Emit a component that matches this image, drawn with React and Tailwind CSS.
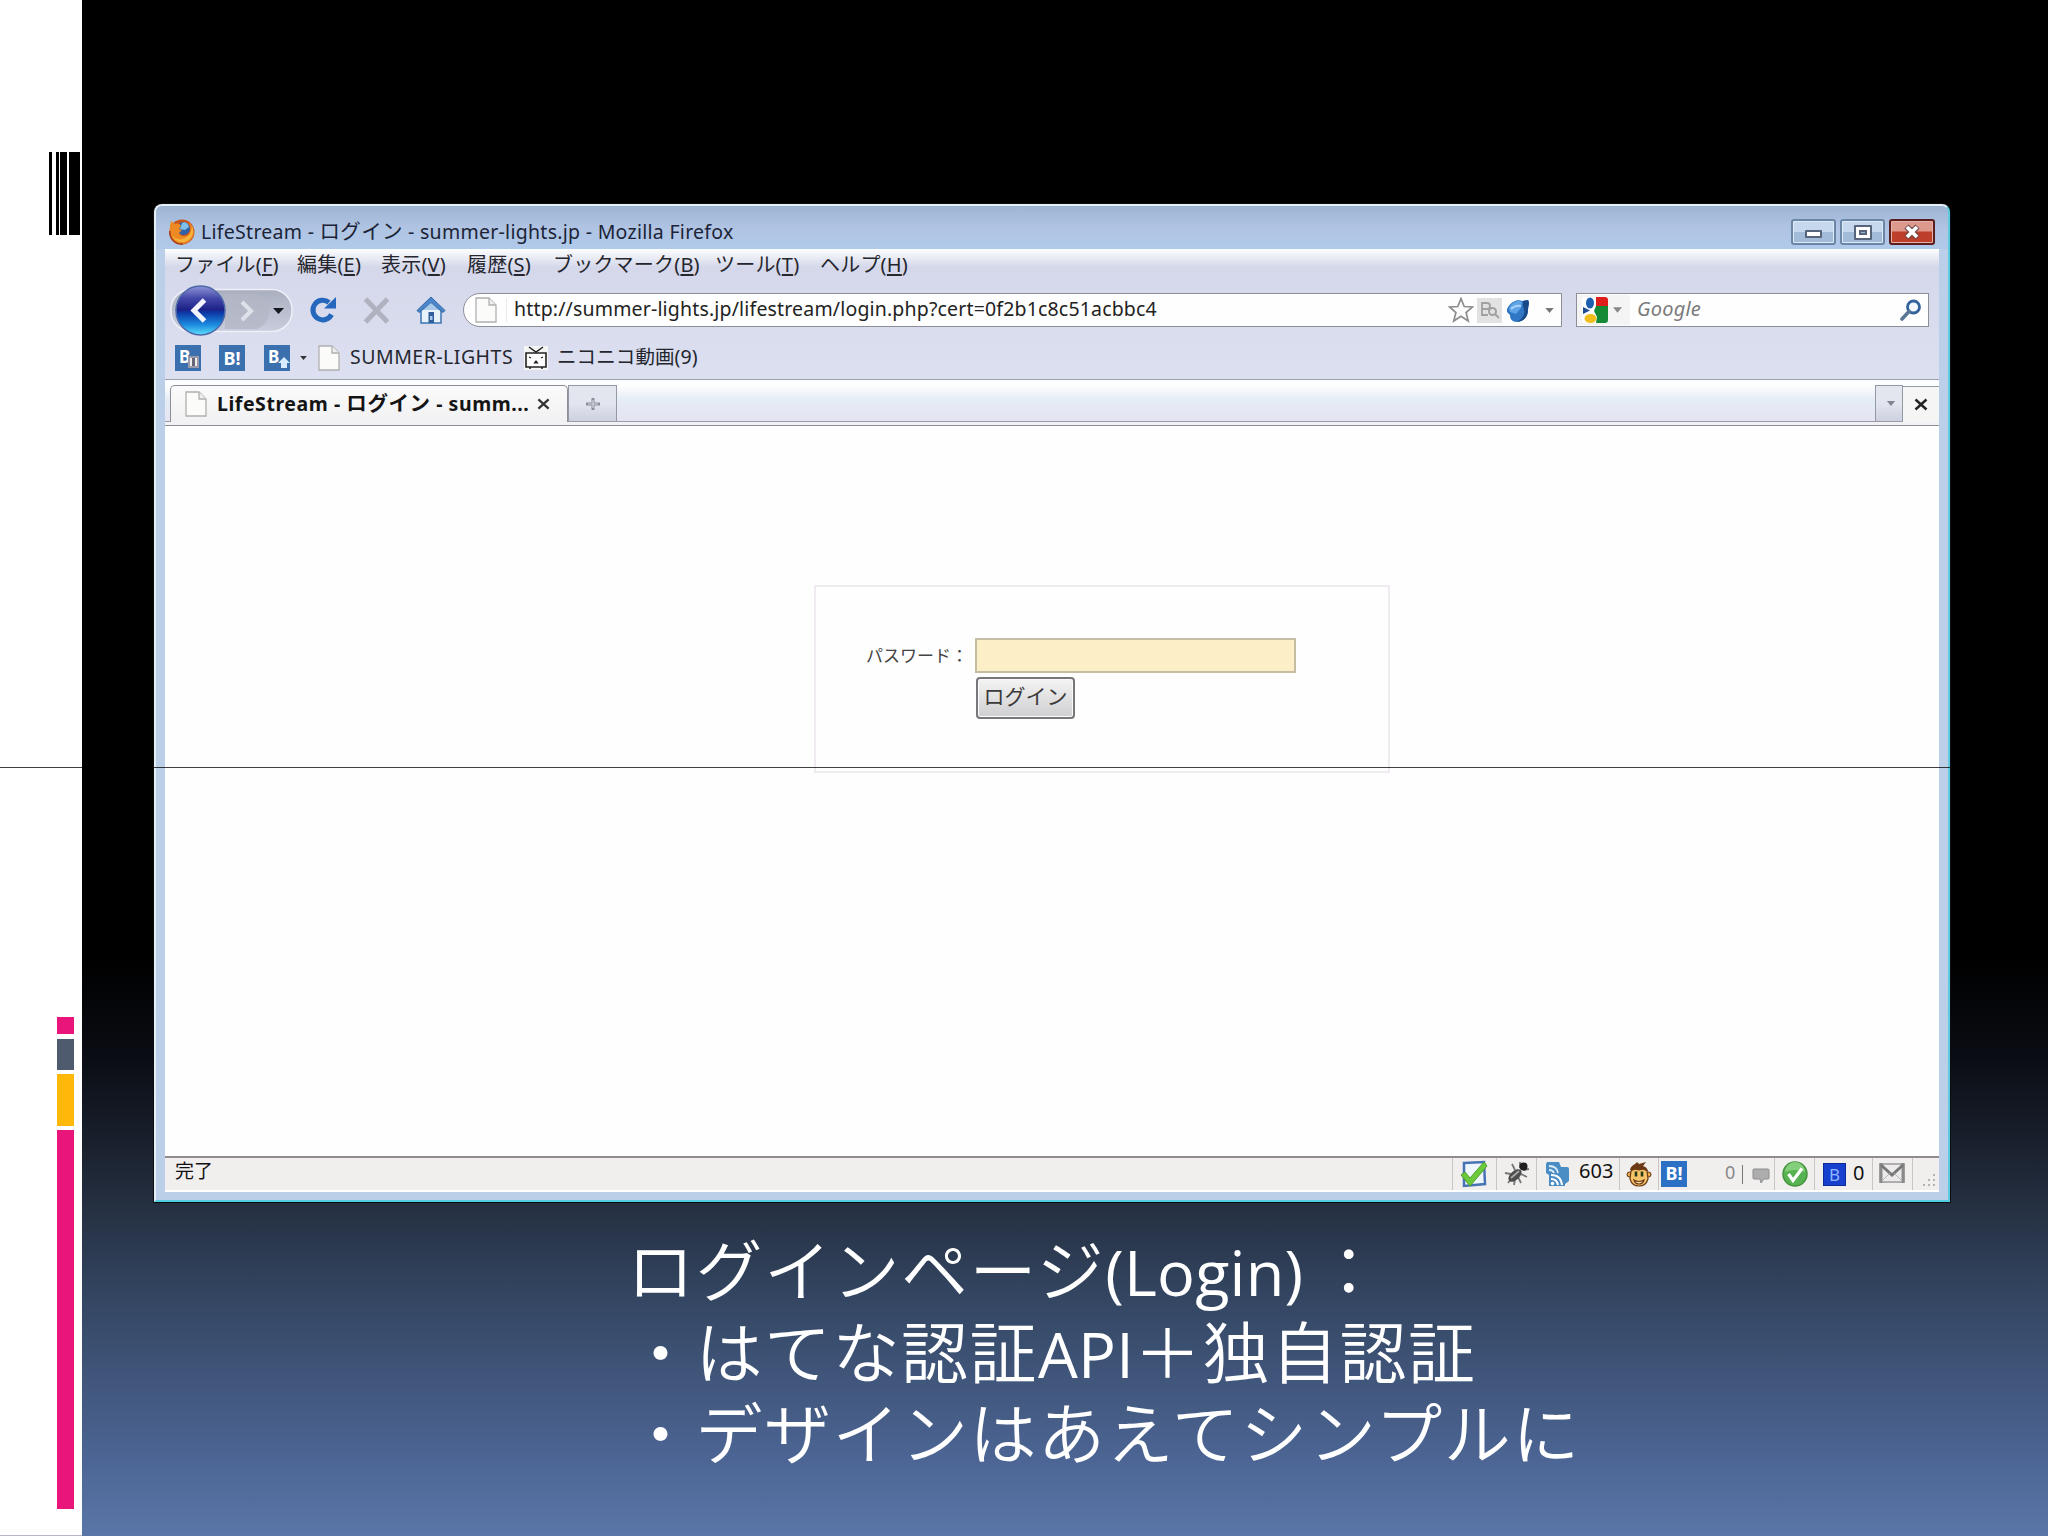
import React from "react";

const FileIcon = ({ className }) => (
  <svg viewBox="0 0 22 26" className={className}>
    <path d="M1 1h13l7 7v17H1z" fill="#fbfbfa" stroke="#b0b0b0" strokeWidth="1.3" />
    <path d="M14 1v7h7" fill="#eee" stroke="#b0b0b0" strokeWidth="1.3" />
  </svg>
);

const FirefoxIcon = () => (
  <svg viewBox="0 0 28 28" className="w-[28px] h-[28px]">
    <circle cx="14" cy="14" r="12.5" fill="#c9541a" />
    <circle cx="15.500" cy="10.500" r="6.500" fill="#2f62a8" />
    <path d="M14 5c3-2 6 0 7 4l-4 3-5-1z" fill="#7fc0ea" />
    <path d="M2 8l1-5 4 3c3-1 5 0 6 2l-2 3 3 1-3 3c1 4 7 4 10 1 2-3 2-8-1-12 5 3 8 11 4 16-4 7-14 8-19 2C2 18 1 13 2 8z" fill="#ee8a24" />
    <path d="M24 8c3 6 0 14-8 16-5 1-10-2-12-7 3 4 8 6 13 3 4-2 7-6 7-12z" fill="#f6b43c" />
    <path d="M2 13c-1 7 5 14 13 13" fill="none" stroke="#a83c14" strokeWidth="1.5" />
  </svg>
);

const Caret = ({ className }) => (
  <svg viewBox="0 0 10 6" className={className}>
    <path d="M0 0h10L5 6z" fill="currentColor" />
  </svg>
);

const Cross = ({ className }) => (
  <svg viewBox="0 0 14 12" className={className}>
    <path d="M1.500 1l11 10M12.500 1l-11 10" stroke="currentColor" strokeWidth="2.400" fill="none" />
  </svg>
);

const menus = [
  { label: "ファイル", k: "F", w: "w-[122px]" },
  { label: "編集", k: "E", w: "w-[84px]" },
  { label: "表示", k: "V", w: "w-[86px]" },
  { label: "履歴", k: "S", w: "w-[86px]" },
  { label: "ブックマーク", k: "B", w: "w-[162px]" },
  { label: "ツール", k: "T", w: "w-[105px]" },
  { label: "ヘルプ", k: "H", w: "w-[100px]" },
];

const TitleBar = () => (
  <div className="h-[43px] shrink-0 flex items-start pl-[12px] pt-[12px] pr-[13px] bg-linear-to-b from-[#9cb5d3] via-[#b0c3e2] to-[#b0caeb]">
    <FirefoxIcon />
    <div className="ml-[5px] text-[19.5px] leading-[26px] text-[#1b2436] whitespace-nowrap tracking-[0.28px]">
      LifeStream - <span className="text-[20.5px]">ログイン</span> - summer-lights.jp - Mozilla Firefox
    </div>
    <div className="ml-auto mt-[1px] flex gap-[4px]">
      <div className="w-[45px] h-[26px] rounded-[3px] border-2 border-[#6b87a8] bg-linear-to-b from-[#c6d8ed] from-50% to-[#a2bbd9] to-50% shadow-[inset_0_0_0_1px_#dfeaf7] flex justify-center">
        <div className="mt-[9px] w-[17px] h-[8px] bg-white border-2 border-[#56657c] rounded-[1px]" />
      </div>
      <div className="w-[45px] h-[26px] rounded-[3px] border-2 border-[#6b87a8] bg-linear-to-b from-[#c6d8ed] from-50% to-[#a2bbd9] to-50% shadow-[inset_0_0_0_1px_#dfeaf7] flex items-center justify-center">
        <div className="w-[18px] h-[15px] bg-white border-2 border-[#56657c] rounded-[1px] flex items-center justify-center">
          <div className="w-[8px] h-[5px] border-2 border-[#56657c] bg-[#9db4d0]" />
        </div>
      </div>
      <div className="w-[46px] h-[26px] rounded-[3px] border-2 border-[#5b1d1d] bg-linear-to-b from-[#dd9a8c] from-45% to-[#bd3e29] to-50% shadow-[inset_0_0_0_1px_#e8b3a8] flex items-center justify-center">
        <svg viewBox="0 0 18 16" className="w-[18px] h-[16px]">
          <path d="M3.500 2.500l11 11M14.500 2.500l-11 11" stroke="#6b4747" strokeWidth="6" />
          <path d="M4 3l10 10M14 3L4 13" stroke="#fff" strokeWidth="3.800" />
        </svg>
      </div>
    </div>
  </div>
);

const NavBar = () => (
  <div className="h-[52px] flex items-center pl-[4px]">
    {/* back / forward */}
    <svg viewBox="0 0 126 52" className="w-[126px] h-[52px]">
      <defs>
        <linearGradient id="pill" x1="0" y1="0" x2="0" y2="1">
          <stop offset="0" stopColor="#a9afbf" />
          <stop offset="1" stopColor="#c9cddd" />
        </linearGradient>
        <linearGradient id="back" x1="0" y1="0" x2="0" y2="1">
          <stop offset="0" stopColor="#8f95d8" />
          <stop offset="0.25" stopColor="#4348a8" />
          <stop offset="0.48" stopColor="#1c2288" />
          <stop offset="0.55" stopColor="#0c3aa8" />
          <stop offset="0.8" stopColor="#1d8ee0" />
          <stop offset="1" stopColor="#5fe0fa" />
        </linearGradient>
      </defs>
      <rect x="2" y="5.500" width="121" height="42" rx="20" fill="url(#pill)" stroke="#edf0f8" strokeWidth="1.500" />
      <path d="M56 10h32c8 4 12 8 12 17s-4 14-12 18H56z" fill="#b3b7c4" opacity=".75" />
      <path d="M73 18l9 9-9 9" fill="none" stroke="#dfe1ea" strokeWidth="4" />
      <path d="M104 24h11l-5.500 6z" fill="#15181f" />
      <circle cx="31.500" cy="26.500" r="24.500" fill="url(#back)" stroke="#4d68a8" strokeWidth="1.500" />
      <path d="M35.500 16L25 26.500 35.500 37" fill="none" stroke="#f2f4ff" strokeWidth="5" />
    </svg>
    {/* reload */}
    <svg viewBox="0 0 28 28" className="ml-[14px] w-[28px] h-[28px]">
      <path d="M22.500 18.500A9.800 9.800 0 1 1 20 6.500" fill="none" stroke="#2467bd" strokeWidth="5" />
      <path d="M15 12.500L27 12.500V1z" fill="#2467bd" />
    </svg>
    {/* stop */}
    <svg viewBox="0 0 28 28" className="ml-[26px] w-[28px] h-[28px]">
      <path d="M2.500 3l22 23M24.500 3l-22 23" stroke="#b0b3bf" strokeWidth="5" />
    </svg>
    {/* home */}
    <svg viewBox="0 0 30 28" className="ml-[25px] w-[30px] h-[28px]">
      <path d="M5 13h20v14H5z" fill="#e8f2fb" stroke="#3d74b2" strokeWidth="1.500" />
      <path d="M15 1L1 14.500l2 2L15 7l12 9.500 2-2z" fill="#4d86c8" stroke="#2f67a9" />
      <path d="M15 7l8 7H7z" fill="#a9c9ea" />
      <path d="M12.500 16h5.500v11h-5.500z" fill="#30609c" />
      <path d="M14 20h2.500v4H14z" fill="#a9c9ea" />
    </svg>

    <div className="ml-[17px] w-[1099px] h-[34px] rounded-l-[17px] border border-[#8c8f98] bg-[#fefefe] flex items-center">
      <FileIcon className="ml-[11px] w-[22px] h-[26px]" />
      <div className="ml-[9px] w-px h-[24px] bg-[#ebebee]" />
      <div className="ml-[7px] -mt-[2px] text-[19.5px] text-[#222] tracking-[0.17px] whitespace-nowrap">
        http://summer-lights.jp/lifestream/login.php?cert=0f2b1c8c51acbbc4
      </div>
      <div className="ml-auto flex items-center">
        <svg viewBox="0 0 26 26" className="w-[26px] h-[26px]">
          <path d="M13 1.500l3.200 8 8.300.5-6.400 5.500 2.200 8.500-7.300-4.700L5.700 24l2.200-8.500L1.500 10l8.300-.5z" fill="#fcfcfc" stroke="#8d8d8d" strokeWidth="1.700" />
        </svg>
        <div className="ml-[3px] w-[25px] h-[25px] bg-[#e2e2e2] flex items-center justify-center">
          <svg viewBox="0 0 20 18" className="w-[20px] h-[18px] text-[#a0a0a0]">
            <path d="M2 2h5a3 3 0 0 1 0 6H2zM2 8h6M2 8v6h6" fill="none" stroke="currentColor" strokeWidth="1.800" />
            <circle cx="12.500" cy="10.500" r="3.500" fill="none" stroke="currentColor" strokeWidth="2" />
            <path d="M15 13l4 4" stroke="currentColor" strokeWidth="2" />
          </svg>
        </div>
        <svg viewBox="0 0 24 26" className="ml-[4px] w-[24px] h-[26px]">
          <path d="M1 12C5 4 12 2 16 4l6-1c2 3 0 6 0 10 0 8-6 12-11 12S4 22 4 18l-3-3z" fill="#2f76c5" />
          <path d="M3 11C7 4 12 3 16 5l-1 6-5 6-6-2z" fill="#5ca4e6" />
          <path d="M17 4l5-1c2 3 0 6 0 10 0 8-6 12-11 12 7-4 9-10 6-16z" fill="#174a86" />
          <path d="M5 12c3-3 6-4 10-3" fill="none" stroke="#a8d2f7" strokeWidth="2" />
        </svg>
        <Caret className="ml-[15px] mr-[7px] w-[9px] h-[5px] text-[#777]" />
      </div>
    </div>

    <div className="ml-[14px] w-[353px] h-[34px] border border-[#8c8f98] bg-[#fefefe] flex items-center">
      <div className="w-[53px] h-[30px] bg-[#f4f4f4] flex items-center">
        <svg viewBox="0 0 26 26" className="ml-[5px] w-[26px] h-[26px]">
          <path d="M0 0h26v26H0z" fill="#fff" />
          <path d="M14 0h9q3 0 3 3v6H14z" fill="#e01d1d" />
          <path d="M14 9h12v14q0 3-3 3h-9l1-6-3-6z" fill="#148a35" />
          <ellipse cx="8" cy="6" rx="4" ry="5.500" fill="#1d5fae" />
          <path d="M1 10l7 3.500L1 17z" fill="#1e4b93" />
          <ellipse cx="8.500" cy="21.500" rx="6" ry="4.500" fill="#f0bf1d" />
        </svg>
        <Caret className="ml-[5px] w-[9px] h-[6px] text-[#888]" />
      </div>
      <div className="ml-[7px] -mt-[2px] italic text-[20px] text-[#7b7b7b] tracking-[0.2px]">Google</div>
      <svg viewBox="0 0 22 22" className="ml-auto mr-[6px] w-[22px] h-[22px]">
        <circle cx="13.500" cy="8" r="6" fill="#f2f8fd" stroke="#33639c" strokeWidth="2.800" />
        <path d="M9 12.500L2 20" stroke="#5b7696" strokeWidth="3.600" strokeLinecap="round" />
      </svg>
    </div>
  </div>
);

const BookmarkBar = () => (
  <div className="h-[43px] flex items-center pl-[10px] text-[19.5px] text-[#23262e] whitespace-nowrap">
    <div className="relative w-[26px] h-[26px] bg-[#3b70ae] text-white font-bold text-[17px] leading-[24px] pl-[4px]">
      B
      <div className="absolute right-[2px] bottom-[3px] w-[11px] h-[12px] bg-[#eee] border-2 border-[#99a] flex justify-center">
        <div className="w-[3px] h-full bg-[#667]" />
      </div>
    </div>
    <div className="ml-[18px] w-[26px] h-[26px] bg-[#3b70ae] text-white font-bold text-[18px] leading-[26px] text-center">B!</div>
    <div className="relative ml-[19px] w-[26px] h-[26px] bg-[#3b70ae] text-white font-bold text-[17px] leading-[24px] pl-[4px]">
      B
      <svg viewBox="0 0 12 12" className="absolute right-0 bottom-[2px] w-[12px] h-[12px]">
        <path d="M6 0l6 6H9v5H3V6H0z" fill="#d6ecff" />
      </svg>
    </div>
    <Caret className="ml-[10px] w-[7px] h-[4px] text-[#333]" />
    <FileIcon className="ml-[11px] w-[22px] h-[26px]" />
    <div className="ml-[10px] -mt-[2px] w-[174px] tracking-[0.5px]">SUMMER-LIGHTS</div>
    <svg viewBox="0 0 24 24" className="w-[24px] h-[24px]">
      <path d="M0 0h24v24H0z" fill="#f4f4f4" />
      <path d="M2 7h20v14H2z" fill="#fff" stroke="#222" strokeWidth="1.600" />
      <path d="M5 1l7 5 7-5M6 21v2M18 21v2" fill="none" stroke="#222" strokeWidth="1.500" />
      <path d="M5 11l2 1M17 12l2-1M10.500 17h3l-1.500-2z" fill="#222" stroke="#222" strokeWidth="1.200" />
    </svg>
    <div className="ml-[9px] -mt-[2px] tracking-[0.1px]">ニコニコ動画(9)</div>
  </div>
);

const TabBar = () => (
  <div className="h-[47px] shrink-0 border-t border-[#9a9fad] border-b border-b-[#8b8e99] bg-[#f1f1f6]">
    <div className="h-[42px] flex items-end border-b border-[#9b9ca6] bg-linear-to-b from-[#fcfdfe] from-15% via-[#e4ecf5] via-50% to-[#e6e4f2]">
      <div className="ml-[5px] w-[398px] h-[37px] -mb-px rounded-t-[5px] border border-b-0 border-[#8e8f96] bg-linear-to-b from-[#fbfbfb] to-[#f1f1f3] flex items-center">
        <FileIcon className="ml-[14px] w-[22px] h-[26px]" />
        <div className="ml-[10px] -mt-[2px] w-[320px] font-bold text-[19.5px] leading-[28px] text-[#141414] tracking-[0.55px] whitespace-nowrap">
          LifeStream - <span className="text-[20.5px]">ログイン</span> - summ...
        </div>
        <Cross className="w-[13px] h-[12px] text-[#333]" />
      </div>
      <div className="w-[49px] h-[36px] border border-b-0 border-[#9598a5] bg-linear-to-b from-[#e3e5ef] from-50% to-[#cdd0df] flex items-center justify-center">
        <svg viewBox="0 0 16 14" className="w-[16px] h-[14px]">
          <path d="M8 1v12M1 7h14" stroke="#8c8f9b" strokeWidth="3" />
          <path d="M8 3v8M3 7h10" stroke="#d4d6e2" strokeWidth="1.200" />
        </svg>
      </div>
      <div className="ml-auto w-[28px] h-[36px] border border-b-0 border-[#9598a5] bg-linear-to-b from-[#e3e5ef] from-50% to-[#cdd0df] flex items-center justify-center">
        <Caret className="ml-[3px] w-[10px] h-[5px] text-[#83868f]" />
      </div>
      <div className="w-[36px] h-[36px] -mb-px border-t border-[#9598a5] bg-[#f5f5f5] flex items-center justify-center">
        <Cross className="w-[14px] h-[13px] text-[#222]" />
      </div>
    </div>
  </div>
);

const LoginPage = () => (
  <div className="flex-1 bg-[#fefefe] flex items-start pt-[159px] pl-[649px]">
    <div className="w-[576px] h-[188px] border-2 border-[#efebf1] pt-[51px] pl-[50px]">
      <div className="flex items-center">
        <div className="w-[109px] text-[17px] text-[#444] whitespace-nowrap">パスワード：</div>
        <div className="w-[321px] h-[35px] border-2 border-[#c4bda4] bg-[#fcefc8]" />
      </div>
      <div className="mt-[4px] ml-[110px] w-[99px] h-[42px] rounded-[4px] border-2 border-[#77777b] bg-linear-to-b from-[#f4f4f4] to-[#cfcfd1] shadow-[inset_0_0_0_1px_#fafafa] text-[21px] leading-[35px] text-[#3a3a3a] text-center whitespace-nowrap">
        ログイン
      </div>
    </div>
  </div>
);

const Cell = ({ className, children }) => (
  <div className={"h-[32px] flex items-center shrink-0 border-l border-[#c9c5c5] " + className}>{children}</div>
);

const StatusBar = () => (
  <div className="h-[36px] shrink-0 border-t-2 border-[#8f8b8f] border-b-2 border-b-white bg-[#f1eeee] flex items-center">
    <div className="ml-[10px] -mt-[6px] text-[19px] leading-[30px] text-[#111] mr-auto">完了</div>
    <Cell className="w-[44px] pl-[7px]">
      <svg viewBox="0 0 28 28" className="w-[28px] h-[28px]">
        <path d="M4 3l20-1 1 22-21 2z" fill="#eef5fd" stroke="#4673b4" strokeWidth="2.500" />
        <path d="M1 15l4-3 5 6L24 2l3 4-17 20z" fill="#6cc93c" stroke="#4aa326" />
      </svg>
    </Cell>
    <Cell className="w-[40px] pl-[7px]">
      <svg viewBox="0 0 26 26" className="w-[26px] h-[26px]">
        <path d="M1 12l6 1M4 22l4-5M10 24l1-6M17 22l-3-6M23 16l-6-3M8 3l3 6M16 1l0 6M25 8l-6 1" stroke="#777" strokeWidth="1.800" />
        <ellipse cx="11" cy="14.500" rx="8" ry="4.500" transform="rotate(-42 11 14.500)" fill="#4c4c4c" />
        <path d="M7 17l8-7" stroke="#aaa" strokeWidth="1.800" />
        <circle cx="19.500" cy="5.500" r="4" fill="#1f1f1f" />
      </svg>
    </Cell>
    <Cell className="w-[83px] pl-[7px]">
      <svg viewBox="0 0 26 26" className="w-[26px] h-[26px]">
        <path d="M3 1h12l2 5h6q2 0 2 2v12l-4 3v2H5V14l-3-2V3z" fill="#4a8cc4" />
        <path d="M5 5q8 0 9 7M5 9q4 0 5 3" stroke="#d8ecfa" strokeWidth="1.800" fill="none" />
        <path d="M7 14q10 0 11 10M7 18q6 0 7 6" stroke="#fff" strokeWidth="2" fill="none" />
        <circle cx="8.500" cy="22.500" r="1.800" fill="#fff" />
      </svg>
      <div className="ml-[9px] text-[20px] leading-[28px] text-[#111] -mt-[6px]">603</div>
    </Cell>
    <Cell className="w-[39px] pl-[6px]">
      <svg viewBox="0 0 26 26" className="w-[26px] h-[26px]">
        <path d="M4 9C5 4 9 4 11 1l2 2 7-2-3 4c3 1 4 2 5 5z" fill="#6b3a14" />
        <circle cx="3.500" cy="13.500" r="2.500" fill="#e8a848" stroke="#5c3110" />
        <circle cx="22.500" cy="13.500" r="2.500" fill="#e8a848" stroke="#5c3110" />
        <path d="M5 10q3-3 8-1 5-2 8 1l1 8q-2 7-9 7T4 18z" fill="#f6c469" stroke="#6b3a14" strokeWidth="1.200" />
        <path d="M10 10.500v5M16 10.500v5" stroke="#24391a" strokeWidth="2.600" />
        <path d="M8 19q5 3 10 0-1 4-5 4t-5-4z" stroke="#6b3a14" strokeWidth="1.200" fill="#fce3a4" />
      </svg>
    </Cell>
    <Cell className="w-[116px] pl-[2px]">
      <div className="w-[26px] h-[26px] bg-[#2b70c4] text-white font-bold text-[18px] leading-[25px] text-center">B!</div>
      <div className="ml-[38px] text-[18px] text-[#888] -mt-[3px]">0</div>
      <div className="ml-[7px] w-px h-[19px] bg-[#777]" />
      <svg viewBox="0 0 18 16" className="ml-[9px] mt-[3px] w-[18px] h-[16px]">
        <path d="M2 1h14q1 0 1 1v8q0 1-1 1h-4l-3 4-1-4H2q-1 0-1-1V2q0-1 1-1z" fill="#adadad" stroke="#8e8e8e" />
      </svg>
    </Cell>
    <Cell className="w-[40px] pl-[7px]">
      <svg viewBox="0 0 26 26" className="w-[26px] h-[26px]">
        <circle cx="13" cy="13" r="12" fill="#57b351" stroke="#46943f" strokeWidth="1.500" />
        <path d="M3 11a10 10 0 0 1 20 0q-10-4-20 0z" fill="#84cf7c" />
        <path d="M6.500 13l4.500 6.500L20 7.500" fill="none" stroke="#fff" strokeWidth="3.200" />
      </svg>
    </Cell>
    <Cell className="w-[58px] pl-[8px]">
      <div className="w-[23px] h-[23px] bg-[#1740cf] border border-[#0d2a96] text-[#8fb6ff] text-[17px] leading-[21px] text-center">B</div>
      <div className="ml-[7px] text-[20px] text-[#111] -mt-[3px]">0</div>
    </Cell>
    <Cell className="w-[40px] pl-[6px]">
      <svg viewBox="0 0 26 20" className="w-[26px] h-[20px] -mt-[2px]">
        <path d="M1 1h24v18H1z" fill="#eceaea" stroke="#9a9a9a" strokeWidth="1.500" />
        <path d="M2 0v20M24 0v20" stroke="#8a8a8a" strokeWidth="3" />
        <path d="M2 2l11 10L24 2" fill="none" stroke="#777" strokeWidth="3" />
        <path d="M4 17l7-7M22 17l-7-7" stroke="#b5b5b5" />
      </svg>
    </Cell>
    <Cell className="w-[27px] pl-[10px] items-end pb-[3px]">
      <svg viewBox="0 0 13 13" className="w-[13px] h-[13px]" fill="#b5b2b2">
        <path d="M10 0h2v2h-2zM5 5h2v2H5zM10 5h2v2h-2zM0 10h2v2H0zM5 10h2v2H5zM10 10h2v2h-2z" />
      </svg>
    </Cell>
  </div>
);

const BrowserWindow = () => (
  <div className="w-[1796px] h-[998px] flex flex-col rounded-t-[8px] border-2 border-[#e6eef6] border-r-[#5ccbe0] border-b-[#52cde3] bg-[#bbd0e8] shadow-[0_0_0_1px_#0b0d10] overflow-hidden">
    <TitleBar />
    <div className="mx-[9px] mb-[8px] flex-1 flex flex-col">
      <div className="shrink-0 bg-linear-to-b from-[#fdfefe] via-[#d5d8ea] via-[18px] to-[#dde0f1] h-[130px]">
        <div className="h-[35px] pl-[10px] flex text-[20px] leading-[32px] text-[#25262e] whitespace-nowrap tracking-[0.2px]">
          {menus.map((m) => (
            <div key={m.k} className={m.w}>
              {m.label}(<span className="underline underline-offset-2">{m.k}</span>)
            </div>
          ))}
        </div>
        <NavBar />
        <BookmarkBar />
      </div>
      <TabBar />
      <LoginPage />
      <StatusBar />
    </div>
  </div>
);

const Latin = ({ children }) => (
  <span className="font-normal text-[63px] leading-none font-['Open_Sans'] tracking-[0.2px]">{children}</span>
);

export default function App() {
  return (
    <div className="relative w-[2048px] h-[1536px] flex overflow-hidden font-['Noto_Sans','Noto_Sans_CJK_JP',sans-serif]">
      <div className="w-[82px] shrink-0 bg-white border-b border-[#b6b9cc] flex flex-col">
        <div className="mt-[152px] ml-[49px] h-[83px] flex">
          <div className="w-[3px] bg-black" />
          <div className="ml-[4px] w-[3px] bg-black" />
          <div className="ml-[1px] w-[7px] bg-black" />
          <div className="ml-[2px] w-[11px] bg-black" />
        </div>
        <div className="mt-[782px] ml-[57px] w-[17px] flex flex-col">
          <div className="h-[17px] bg-[#ea157a]" />
          <div className="mt-[5px] h-[31px] bg-[#4e5b6f]" />
          <div className="mt-[4px] h-[52px] bg-[#feb80a]" />
          <div className="mt-[4px] h-[379px] bg-[#ea157a]" />
        </div>
      </div>
      <div className="flex-1 pt-[204px] pl-[72px] bg-[linear-gradient(to_bottom,#000_0px,#000_960px,#0a0d14_1060px,#242e3f_1200px,#32445f_1290px,#3f5478_1370px,#4c6594_1460px,#5a76a8_1536px)]">
        <BrowserWindow />
        <div className="mt-[24px] ml-[473px] text-[67px] leading-[81px] tracking-[1.5px] text-white whitespace-nowrap font-[350] font-['Noto_Sans_CJK_JP',sans-serif]">
          <div className="h-[82px]">ログインページ<Latin>(Login)</Latin><span className="ml-[12px]">：</span></div>
          <div className="h-[81px]">・はてな認証<Latin>API</Latin>＋独自認証</div>
          <div className="h-[81px]">・デザインはあえてシンプルに</div>
        </div>
      </div>
      <div className="absolute left-0 top-[767px] w-full h-px bg-black/75" />
    </div>
  );
}
